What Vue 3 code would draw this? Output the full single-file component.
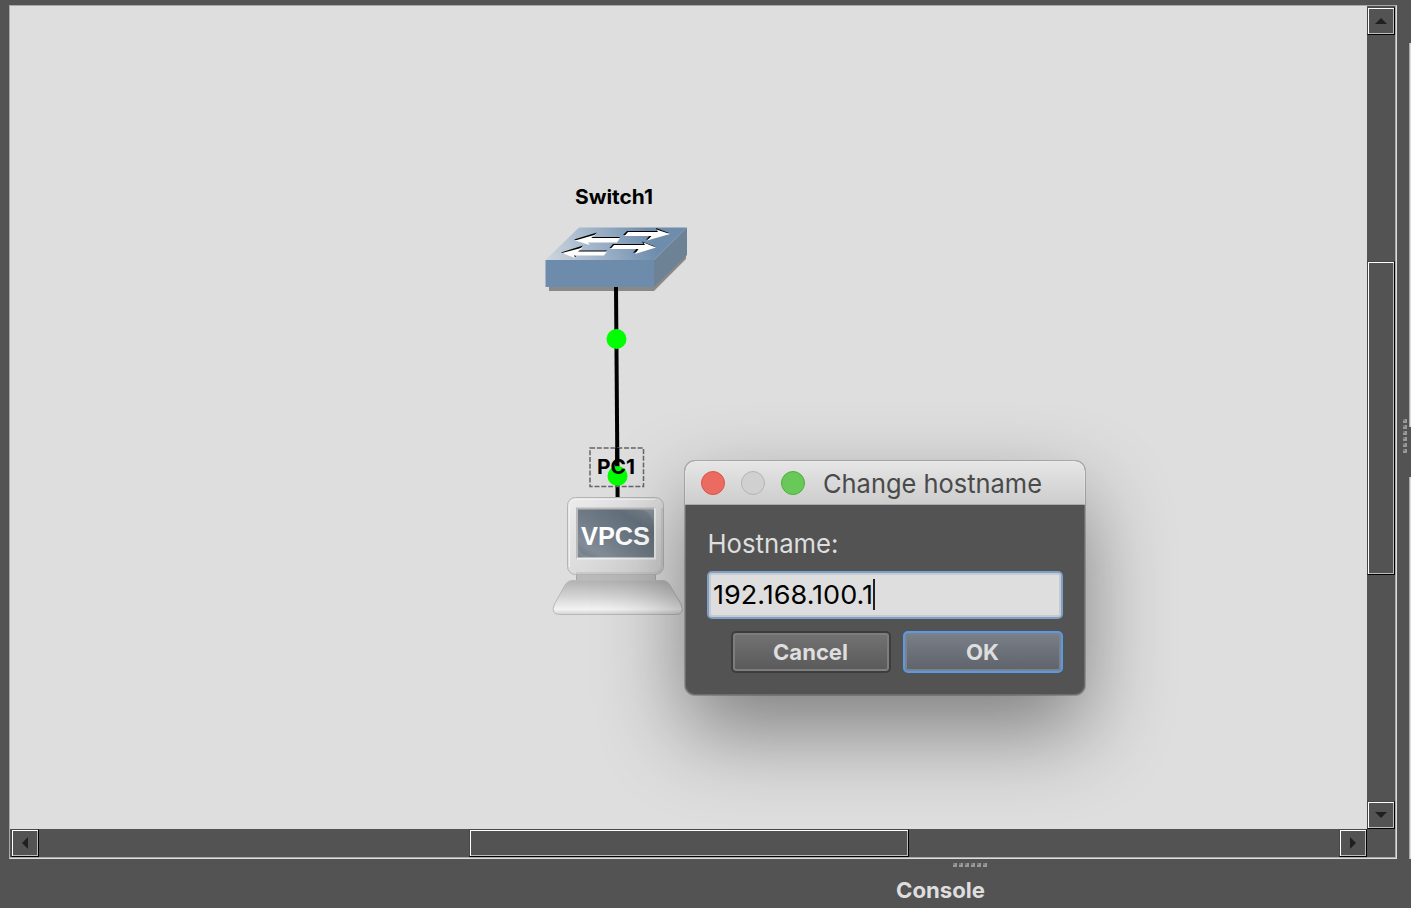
<script setup>
import { ref } from 'vue'
const hostname = ref('192.168.100.1')
</script>

<template>
  <div class="app">
    <div class="workspace">
      <div class="viewport">
        <svg class="scene" width="1357" height="823" viewBox="10 6 1357 823">
          <defs>
            <linearGradient id="top" gradientUnits="userSpaceOnUse" x1="552" y1="268" x2="650" y2="232">
              <stop offset="0" stop-color="#ccd4dd" /><stop offset=".5" stop-color="#9db2c8" /><stop offset="1" stop-color="#6e8cac" />
            </linearGradient>
            <linearGradient id="case" x1="0" y1="0" x2="1" y2="1">
              <stop offset="0" stop-color="#ececec" /><stop offset=".5" stop-color="#dcdcdc" /><stop offset="1" stop-color="#cfcfcf" />
            </linearGradient>
            <linearGradient id="base" x1="0" y1="0" x2="0" y2="1">
              <stop offset="0" stop-color="#b2b2b2" /><stop offset=".45" stop-color="#d2d2d2" /><stop offset=".85" stop-color="#f3f3f3" /><stop offset="1" stop-color="#d2d2d2" />
            </linearGradient>
            <linearGradient id="glass" x1="0" y1="1" x2="1" y2="0">
              <stop offset="0" stop-color="#75808a" /><stop offset=".18" stop-color="#98a1aa" /><stop offset=".45" stop-color="#7d8892" /><stop offset=".75" stop-color="#6b7782" /><stop offset="1" stop-color="#8e98a1" />
            </linearGradient>
          </defs>

          <path d="M549 286 H654 L686 254 V259 L654 291 H549Z" fill="#8b8888" />
          <path d="M545.500 260 L579 227.500 H687 L654 260Z" fill="url(#top)" />
          <path d="M654 260 L687 227.500 V255 L654 287Z" fill="#6d8294" />
          <path d="M545.500 260 H654 V287 H545.500Z" fill="#6d8bab" />
          <g fill="#000">
            <path d="M574 239.500 L597 232.500 L592 237 H620 L617 241 H588 L589 244Z" />
            <path d="M561 252.500 L583 245.500 L578 250.500 H607 L604 254.500 H575 L576 257Z" />
            <path d="M669 233 L656 228 L657 231 H627 L623 235 H650 L646 240Z" />
            <path d="M655 246.500 L642 241.500 L643.500 244 H613 L609.500 248 H637 L633 253Z" />
          </g>
          <g fill="#fff">
            <path d="M575 240.500 L596 234.500 L591 238 H620 L617 242.500 H588.500 L589.500 245Z" />
            <path d="M562 253 L583 247.500 L578 251.500 H607 L604 255.500 H574 L575 258Z" />
            <path d="M670 234 L656.500 229.500 L658 232 H628 L624.500 236 H651.500 L647 240.500Z" />
            <path d="M656 247.500 L643.500 242.500 L645 245 H614 L610.500 249 H638.500 L635 254Z" />
          </g>
          <text class="node-name" x="575" y="204" textLength="78" lengthAdjust="spacingAndGlyphs">Switch1</text>

          <path d="M616 287 L617.600 497" stroke="#000" stroke-width="4" />
          <circle cx="616.500" cy="339" r="10" fill="#0f0" />
          <circle cx="617.500" cy="476" r="10" fill="#0f0" />
          <rect x="590" y="448" width="53.500" height="38.500" fill="none" stroke="#666" stroke-width="1.500" stroke-dasharray="5 1.800" />
          <path d="M617.200 448 V466" stroke="#000" stroke-width="4" />
          <text class="node-name" x="597" y="474" textLength="38" lengthAdjust="spacingAndGlyphs">PC1</text>

          <path d="M576.500 574 H655.500 V581 H576.500Z" fill="#bababa" stroke="#a6a6a6" />
          <rect x="567.500" y="497.500" width="96" height="77" rx="8" fill="url(#case)" stroke="#b3b3b3" />
          <path d="M569.500 567 V505 Q569.500 499.500 576 499.500 H655" fill="none" stroke="#f0f0f0" />
          <path d="M662 508 V565 Q662 573 654 573 H576" fill="none" stroke="#c4c4c4" stroke-width="1.500" />
          <rect x="578" y="509" width="77" height="49" fill="url(#glass)" />
          <path d="M578 547 V509 H638 Q652 511 654 526 V557.500 H596 Q579 556 578 547Z" fill="#53616c" opacity=".3" />
          <path d="M577 558.500 V508.500 H655.500" fill="none" stroke="#bababa" stroke-width="2" />
          <path d="M577 558.500 H655 V508" fill="none" stroke="#eee" stroke-width="2" />
          <text class="vpcs" x="581" y="545" textLength="69" lengthAdjust="spacingAndGlyphs">VPCS</text>
          <path d="M572 580.500 H663 Q667 580.500 669.500 584.500 L681 604 Q685 614.500 676 614.500 H560 Q550 614.500 554.500 604 L565 585 Q567.500 580.500 572 580.500Z" fill="url(#base)" stroke="#b8b8b8" />
        </svg>
      </div>
      <div class="vbar">
        <div class="raised step"><svg width="12" height="6"><path d="M0 6 L6 0 L12 6Z" /></svg></div>
        <div class="raised vthumb"></div>
        <div class="raised step"><svg width="12" height="6"><path d="M0 0 L6 6 L12 0Z" /></svg></div>
      </div>
      <div class="hbar">
        <div class="raised step"><svg width="6" height="12"><path d="M6 0 L0 6 L6 12Z" /></svg></div>
        <div class="raised hthumb"></div>
        <div class="raised step"><svg width="6" height="12"><path d="M0 0 L6 6 L0 12Z" /></svg></div>
      </div>
    </div>

    <aside class="side">
      <div class="edge upper"></div>
      <div class="edge lower"></div>
      <div class="grip vertical"><i v-for="n in 6" :key="n"></i></div>
    </aside>

    <footer class="console">
      <div class="grip"><i v-for="n in 6" :key="n"></i></div>
      <svg class="label" width="100" height="30"><text x="6" y="23" textLength="89" lengthAdjust="spacingAndGlyphs">Console</text></svg>
    </footer>

    <section class="dialog">
      <header>
        <span class="light red"></span><span class="light off"></span><span class="light green"></span>
        <svg class="title" width="240" height="43"><text x="0" y="31.500" textLength="219" lengthAdjust="spacingAndGlyphs">Change hostname</text></svg>
      </header>
      <div class="content">
        <svg class="field-label" width="200" height="40"><text x="-.5" y="28" textLength="131" lengthAdjust="spacingAndGlyphs">Hostname:</text></svg>
        <div class="field">
          <svg width="320" height="42"><text x="3" y="30" textLength="160" lengthAdjust="spacingAndGlyphs">{{ hostname }}</text><path d="M164 5 V36" stroke="#222" stroke-width="2" /></svg>
        </div>
        <div class="actions">
          <button><svg width="154" height="36"><text x="39" y="26" textLength="75" lengthAdjust="spacingAndGlyphs">Cancel</text></svg></button>
          <button class="primary"><svg width="154" height="36"><text x="60" y="26" textLength="33" lengthAdjust="spacingAndGlyphs">OK</text></svg></button>
        </div>
      </div>
    </section>
  </div>
</template>

<style>
html, body { margin: 0; overflow: hidden; background: #535353; }
</style>

<style scoped>
.app { position: relative; box-sizing: border-box; width: 1411px; height: 908px; overflow: hidden; background: #535353; display: grid; grid-template: 859px 49px / 1397px 14px; font-family: Inter, sans-serif; }
svg { display: block; }
.workspace { margin: 5px 0 0 9px; box-sizing: border-box; border: 1px solid #a9a9a9; border-bottom-color: #dedede; border-right-color: #dedede; box-shadow: inset -1px -1px #a9a9a9; display: grid; grid-template: 823px 29px / 1357px 29px; }
.viewport { background: #dedede; }
.node-name { font: 700 20px Inter, sans-serif; }
.vpcs { font: 700 26px "Liberation Sans", sans-serif; fill: #fff; }
.vbar, .hbar { background: #535353; display: flex; }
.vbar { width: 28px; height: 822px; padding-top: 1px; flex-direction: column; }
.hbar { width: 1356px; height: 28px; padding-left: 1px; }
.raised { box-sizing: border-box; flex: none; width: 28px; height: 28px; border: 1px solid #474747; border-right-color: #000; border-bottom-color: #000; box-shadow: inset 1px 1px #fff, inset -1px -1px #bcbcbc; display: flex; align-items: center; justify-content: center; }
.step path { fill: #202020; }
.vthumb { height: 314px; margin: 226px 0; }
.hthumb { width: 440px; margin: 0 430px; }
.side { position: relative; }
.edge { position: absolute; left: 12px; width: 2px; box-sizing: border-box; border-left: 1px solid #aaa; background: #dedede; }
.upper { top: 43px; height: 384px; }
.lower { top: 477px; height: 382px; }
.grip { display: flex; gap: 2px; }
.grip i { width: 4px; height: 4px; background: linear-gradient(#777, #777) 0 0 / 2px 2px no-repeat, #999; }
.vertical { position: absolute; left: 6px; top: 419px; flex-direction: column; }
.console { grid-column: 1 / 3; padding: 4px 0 0 953px; }
.label { margin: 8px 0 0 -63px; font-size: 22px; font-weight: 700; fill: #dedede; }
.dialog { position: absolute; left: 685px; top: 461px; width: 400px; height: 234px; border-radius: 10px; overflow: hidden; background: #535353; box-shadow: 0 0 0 1px rgba(0,0,0,.2), 0 36px 86px rgba(0,0,0,.43); }
.dialog::after { content: ""; position: absolute; inset: 0; border-radius: 10px; box-shadow: inset 0 0 0 1px rgba(255,255,255,.16); pointer-events: none; }
header { box-sizing: border-box; height: 44px; background: linear-gradient(#e6e6e6, #cdcdcd); border-bottom: 1px solid #aaa; display: flex; align-items: center; padding-left: 16px; gap: 16px; }
.light { width: 24px; height: 24px; border-radius: 50%; box-sizing: border-box; border: 1px solid; }
.red { background: #ec6b60; border-color: #d7554b; }
.off { background: #d0d0d0; border-color: #b3b3b3; }
.green { background: #68c958; border-color: #50ad3e; }
.title { margin-left: 2px; font-size: 26px; fill: #4a4a4a; }
.content { padding: 20px 22px; }
.field-label { margin-left: 1px; font-size: 26px; fill: #dedede; }
.field { box-sizing: border-box; height: 48px; width: 356px; margin-top: 6px; border: 2px solid #7e9fc8; border-radius: 5px; background: #dedede; box-shadow: inset 0 0 0 2px #c8cbce; padding: 1px; font-size: 26px; fill: #000; }
.actions { display: flex; justify-content: flex-end; gap: 12px; margin-top: 12px; }
button { box-sizing: border-box; width: 160px; height: 42px; padding: 1px; margin: 0; border: 2px solid #3d3d3d; border-radius: 5px; background: linear-gradient(#737373, #595959); box-shadow: inset 0 0 0 2px #7d7d7d; font: 700 22px Inter, sans-serif; fill: #dedede; }
.primary { border-color: #579ae8; background: linear-gradient(#7a7f88, #5e636b); box-shadow: inset 0 0 0 2px #7e8186; }
</style>
